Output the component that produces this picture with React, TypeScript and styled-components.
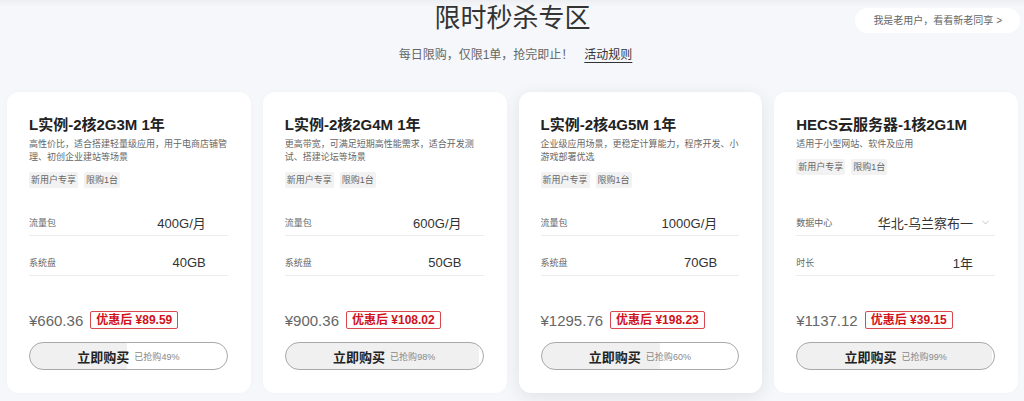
import styled, { createGlobalStyle } from "styled-components";
import { ChevronDown } from "lucide-react";

const Global = createGlobalStyle`
  html, body {
    margin: 0;
    padding: 0;
    background: #f5f7fa;
  }
  body {
    font-family: "Liberation Sans", "Noto Sans CJK SC", sans-serif;
    color: #333;
  }
`;

const Page = styled.div`
  width: 1024px;
  height: 401px;
  overflow: hidden;
  box-sizing: border-box;
  padding: 0 6px 0 7px;
  background: linear-gradient(to bottom, #eceef1 0px, #f5f7fa 7px);
`;

const Header = styled.div`
  display: grid;
  grid-template-columns: 1fr auto 1fr;
  align-items: start;
`;

const TitleBlock = styled.div`
  grid-column: 2;
  display: flex;
  flex-direction: column;
  align-items: center;
`;

const Title = styled.h1`
  margin: 0;
  font-size: 26px;
  font-weight: 400;
  line-height: 36px;
  color: #333;
`;

const Sub = styled.div`
  margin-top: 11px;
  margin-right: -6px;
  display: flex;
  gap: 11px;
  font-size: 12px;
  line-height: 16px;
  color: #666;
  white-space: nowrap;
`;

const Rule = styled.a`
  color: #333;
  text-decoration: underline;
  text-underline-offset: 3px;
`;

const OldUser = styled.div`
  grid-column: 3;
  justify-self: end;
  margin-top: 8px;
  margin-right: -2px;
  height: 25px;
  padding: 0 18px;
  border-radius: 13px;
  background: #fff;
  font-size: 10px;
  line-height: 25px;
  color: #666;
  white-space: nowrap;
`;

const Cards = styled.div`
  margin-top: 29px;
  display: grid;
  grid-template-columns: repeat(4, 1fr);
  gap: 12px;
`;

const Card = styled.div<{ $active?: boolean }>`
  background: #fff;
  border-radius: 12px;
  padding: 22px 23px 23px 22px;
  box-shadow: ${(p) =>
    p.$active ? "0 4px 18px rgba(0, 0, 0, 0.09)" : "0 0 6px rgba(0, 0, 0, 0.02)"};
  display: flex;
  flex-direction: column;
`;

const Head = styled.div`
  min-height: 82px;
  display: flex;
  flex-direction: column;
`;

const CardTitle = styled.div`
  font-size: 15px;
  font-weight: 700;
  line-height: 22px;
  color: #222;
  white-space: nowrap;
`;

const Desc = styled.div`
  margin-top: 2px;
  font-size: 9px;
  line-height: 13px;
  color: #666;
`;

const Tags = styled.div`
  margin-top: 8px;
  display: flex;
  gap: 6px;
`;

const Tag = styled.span`
  height: 16px;
  padding: 0 2px;
  background: #f2f2f2;
  border-radius: 2px;
  font-size: 9px;
  line-height: 16px;
  color: #666;
`;

const Row = styled.div`
  height: 40px;
  box-sizing: border-box;
  padding-top: 13px;
  border-bottom: 1px solid #ececec;
  display: flex;
  align-items: center;
`;

const Label = styled.span`
  flex: 1;
  font-size: 9px;
  color: #666;
`;

const Value = styled.span`
  font-size: 13px;
  color: #333;
  white-space: nowrap;
`;

const Slot = styled.span`
  width: 22px;
  display: flex;
  justify-content: flex-end;
  padding-right: 4px;
  box-sizing: border-box;
  color: #aaa;
`;

const PriceRow = styled.div`
  margin-top: 34px;
  height: 20px;
  display: flex;
  align-items: center;
  gap: 7px;
`;

const Origin = styled.span`
  font-size: 15px;
  color: #666;
`;

const Deal = styled.span`
  height: 18px;
  box-sizing: border-box;
  padding: 0 5px;
  border: 1px solid #d9474f;
  border-radius: 2px;
  font-size: 12px;
  font-weight: 700;
  line-height: 16px;
  color: #d0121b;
  white-space: nowrap;
`;

const Buy = styled.button<{ $pct: number }>`
  margin-top: 12px;
  height: 28px;
  width: 100%;
  border: 1px solid #a8a8a8;
  border-radius: 14px;
  background: linear-gradient(
    to right,
    #f0f0f0 0,
    #f0f0f0 ${(p) => p.$pct}%,
    #fff ${(p) => p.$pct}%
  );
  display: flex;
  align-items: center;
  justify-content: center;
  gap: 5px;
  font-family: inherit;
  cursor: pointer;
`;

const BuyText = styled.span`
  font-size: 13px;
  font-weight: 700;
  color: #222;
`;

const Sold = styled.span`
  font-size: 9px;
  color: #888;
`;

type Spec = { label: string; value: string; select?: boolean };

type Item = {
  title: string;
  desc: string;
  specs: Spec[];
  origin: string;
  deal: string;
  pct: number;
  active?: boolean;
};

const items: Item[] = [
  {
    title: "L实例-2核2G3M 1年",
    desc: "高性价比，适合搭建轻量级应用，用于电商店铺管理、初创企业建站等场景",
    specs: [
      { label: "流量包", value: "400G/月" },
      { label: "系统盘", value: "40GB" },
    ],
    origin: "¥660.36",
    deal: "优惠后 ¥89.59",
    pct: 49,
  },
  {
    title: "L实例-2核2G4M 1年",
    desc: "更高带宽，可满足短期高性能需求，适合开发测试、搭建论坛等场景",
    specs: [
      { label: "流量包", value: "600G/月" },
      { label: "系统盘", value: "50GB" },
    ],
    origin: "¥900.36",
    deal: "优惠后 ¥108.02",
    pct: 98,
  },
  {
    title: "L实例-2核4G5M 1年",
    desc: "企业级应用场景，更稳定计算能力，程序开发、小游戏部署优选",
    specs: [
      { label: "流量包", value: "1000G/月" },
      { label: "系统盘", value: "70GB" },
    ],
    origin: "¥1295.76",
    deal: "优惠后 ¥198.23",
    pct: 60,
    active: true,
  },
  {
    title: "HECS云服务器-1核2G1M",
    desc: "适用于小型网站、软件及应用",
    specs: [
      { label: "数据中心", value: "华北-乌兰察布一", select: true },
      { label: "时长", value: "1年" },
    ],
    origin: "¥1137.12",
    deal: "优惠后 ¥39.15",
    pct: 99,
  },
];

function App() {
  return (
    <Page>
      <Global />
      <Header>
        <TitleBlock>
          <Title>限时秒杀专区</Title>
          <Sub>
            <span>每日限购，仅限1单，抢完即止！</span>
            <Rule>活动规则</Rule>
          </Sub>
        </TitleBlock>
        <OldUser>我是老用户，看看新老同享 &gt;</OldUser>
      </Header>
      <Cards>
        {items.map((it) => (
          <Card key={it.title} $active={it.active}>
            <Head>
              <CardTitle>{it.title}</CardTitle>
              <Desc>{it.desc}</Desc>
              <Tags>
                <Tag>新用户专享</Tag>
                <Tag>限购1台</Tag>
              </Tags>
            </Head>
            {it.specs.map((s) => (
              <Row key={s.label}>
                <Label>{s.label}</Label>
                <Value>{s.value}</Value>
                <Slot>{s.select && <ChevronDown size={11} strokeWidth={1.5} />}</Slot>
              </Row>
            ))}
            <PriceRow>
              <Origin>{it.origin}</Origin>
              <Deal>{it.deal}</Deal>
            </PriceRow>
            <Buy $pct={it.pct}>
              <BuyText>立即购买</BuyText>
              <Sold>已抢购{it.pct}%</Sold>
            </Buy>
          </Card>
        ))}
      </Cards>
    </Page>
  );
}

export default App;
